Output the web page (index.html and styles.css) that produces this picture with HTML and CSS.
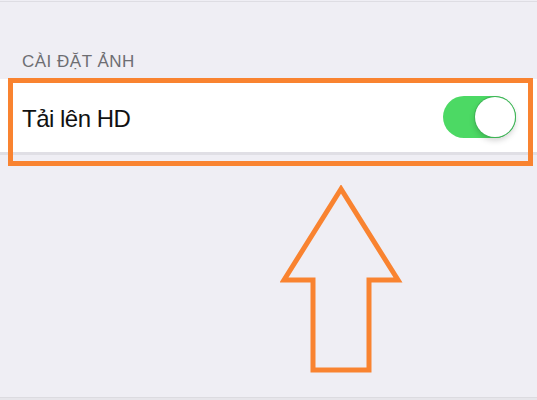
FILE: index.html
```html
<!DOCTYPE html>
<html lang="vi">
<head>
    <meta charset="UTF-8">
    <meta name="viewport" content="width=device-width, initial-scale=1.0">
    <title>Cài đặt ảnh</title>
    <link rel="stylesheet" href="styles.css">
</head>
<body>

<div class="screen">
    <div class="top-line"></div>

    <div class="section-title">CÀI ĐẶT ẢNH</div>

    <div class="setting-row">
        <span class="setting-label">Tải lên HD</span>
        <div class="toggle on">
            <div class="knob"></div>
        </div>
    </div>

    <div class="bottom-line"></div>

    <!-- highlight annotations drawn over the screenshot -->
    <div class="highlight-frame"></div>
    <svg class="arrow" width="130" height="195" viewBox="280 185 130 195">
        <polygon points="341,189 284,280 313,280 313,370 369,370 369,280 398,280"
                 fill="none" stroke="#f98330" stroke-width="5" stroke-linejoin="miter"/>
    </svg>
</div>

</body>
</html>
```

FILE: styles.css
```css
body {
    font-family: "Liberation Sans", Arial, sans-serif;
    background-color: #efeef4;
    margin: 0;
    padding: 0;
}
.screen {
    position: relative;
    height: 400px;
    overflow: hidden;
}
.top-line {
    height: 1px;
    margin-top: 1px;
    background: #dedde3;
}
.section-title {
    margin-top: 50px;
    margin-bottom: 7px;
    padding-left: 22px;
    font-size: 17px;
    line-height: 20px;
    letter-spacing: 0.5px;
    color: #6d6d72;
}
.setting-row {
    display: flex;
    align-items: center;
    justify-content: space-between;
    height: 73px;
    padding: 0 21px 0 22px;
    background: white;
    border-bottom: 3px solid #e0dfe5;
}
.setting-label {
    padding-top: 7px;
    font-size: 24px;
    letter-spacing: -0.5px;
    color: #111;
}
.toggle {
    position: relative;
    width: 73px;
    height: 42px;
    border-radius: 21px;
    background-color: #4cd964;
    margin-top: 2px;
}
.toggle .knob {
    position: absolute;
    top: 1px;
    right: 1px;
    width: 40px;
    height: 40px;
    border-radius: 50%;
    background: white;
    box-shadow: 0 0 0 1px #3fb357, 0 3px 6px rgba(0, 0, 0, 0.2);
}
.bottom-line {
    position: absolute;
    left: 0;
    right: 0;
    top: 397px;
    height: 3px;
    background: #e6e5ea;
    border-top: 1px solid #dcdbe0;
}
.highlight-frame {
    position: absolute;
    left: 8px;
    top: 78px;
    width: 525px;
    height: 88px;
    box-sizing: border-box;
    border: 5px solid #f98330;
}
.arrow {
    position: absolute;
    left: 280px;
    top: 185px;
}
```
